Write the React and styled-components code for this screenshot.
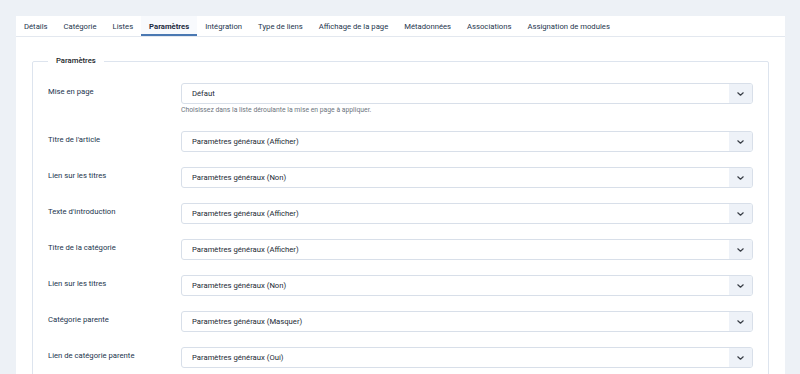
import React from "react";
import styled, { createGlobalStyle } from "styled-components";

const tabs = [
  "Détails",
  "Catégorie",
  "Listes",
  "Paramètres",
  "Intégration",
  "Type de liens",
  "Affichage de la page",
  "Métadonnées",
  "Associations",
  "Assignation de modules",
];

const fields = [
  {
    label: "Mise en page",
    value: "Défaut",
    help: "Choisissez dans la liste déroulante la mise en page à appliquer.",
  },
  { label: "Titre de l'article", value: "Paramètres généraux (Afficher)" },
  { label: "Lien sur les titres", value: "Paramètres généraux (Non)" },
  { label: "Texte d'introduction", value: "Paramètres généraux (Afficher)" },
  { label: "Titre de la catégorie", value: "Paramètres généraux (Afficher)" },
  { label: "Lien sur les titres", value: "Paramètres généraux (Non)" },
  { label: "Catégorie parente", value: "Paramètres généraux (Masquer)" },
  { label: "Lien de catégorie parente", value: "Paramètres généraux (Oui)" },
];

const GlobalStyle = createGlobalStyle`
  html, body {
    margin: 0;
    padding: 0;
    background: #edf1f6;
    font-family: Roboto, "Liberation Sans", Arial, sans-serif;
    overflow: hidden;
  }
  * { box-sizing: border-box; }
`;

const Chevron = () => (
  <svg width="7" height="4" viewBox="0 0 7 4" fill="none">
    <path d="M0.8 0.8l2.7 2.4 2.7-2.4" stroke="#3a3f47" strokeWidth="1.2" strokeLinecap="round" strokeLinejoin="round" />
  </svg>
);

const App = () => {
  return (
    <React.Fragment>
      <GlobalStyle />
      <Page>
        <Card>
          <TabBar>
            {tabs.map((t) => (
              <Tab key={t} active={t === "Paramètres"}>
                {t}
              </Tab>
            ))}
          </TabBar>
          <Panel>
            <Fieldset>
              <Legend>Paramètres</Legend>
              {fields.map((f, i) => (
                <Row key={i}>
                  <Label>{f.label}</Label>
                  <Control>
                    <Select>
                      <Value>{f.value}</Value>
                      <Caret>
                        <Chevron />
                      </Caret>
                    </Select>
                    {f.help && <Help>{f.help}</Help>}
                  </Control>
                </Row>
              ))}
            </Fieldset>
          </Panel>
        </Card>
      </Page>
    </React.Fragment>
  );
};

export default App;

const Page = styled.div`
  padding: 16px 15px 0 16px;
  height: 374px;
`;

const Card = styled.div`
  background: #ffffff;
  min-height: 420px;
`;

const TabBar = styled.div`
  display: flex;
  border-bottom: 1px solid #e3e8ef;
`;

const Tab = styled.div`
  height: 20px;
  padding: 0 8px;
  display: flex;
  align-items: center;
  font-size: 7.7px;
  white-space: nowrap;
  color: ${(p) => (p.active ? "#1c2a3e" : "#24354d")};
  font-weight: ${(p) => (p.active ? 700 : 400)};
  box-shadow: ${(p) => (p.active ? "inset 0 -2px 0 #4a78b2" : "none")};
  background: ${(p) => (p.active ? "#f8fafd" : "transparent")};
`;

const Panel = styled.div`
  padding: 19px 16px 20px 16px;
`;

const Fieldset = styled.fieldset`
  margin: 0;
  padding: 17px 15px 20px 15px;
  border: 1px solid #dde4ee;
  border-radius: 2px;
  min-width: 0;
`;

const Legend = styled.legend`
  padding: 0 8px;
  font-size: 7.7px;
  line-height: 10px;
  height: 10px;
  font-weight: 500;
  color: #22262a;
`;

const Row = styled.div`
  display: grid;
  grid-template-columns: 133px 1fr;
  margin-bottom: 15px;
`;

const Label = styled.div`
  padding-top: 4px;
  font-size: 7.7px;
  line-height: 10px;
  color: #22344d;
`;

const Control = styled.div`
  display: flex;
  flex-direction: column;
`;

const Select = styled.div`
  height: 21px;
  display: flex;
  align-items: stretch;
  border: 1px solid #d8dfe9;
  border-radius: 3px;
  overflow: hidden;
`;

const Value = styled.div`
  flex: 1;
  display: flex;
  align-items: center;
  padding-left: 10px;
  font-size: 7.7px;
  color: #212934;
`;

const Caret = styled.div`
  width: 23px;
  display: flex;
  align-items: center;
  justify-content: center;
  background: #eef2f8;
`;

const Help = styled.div`
  margin: 2px 0 1px;
  font-size: 6.8px;
  line-height: 9px;
  color: #6d757e;
`;
